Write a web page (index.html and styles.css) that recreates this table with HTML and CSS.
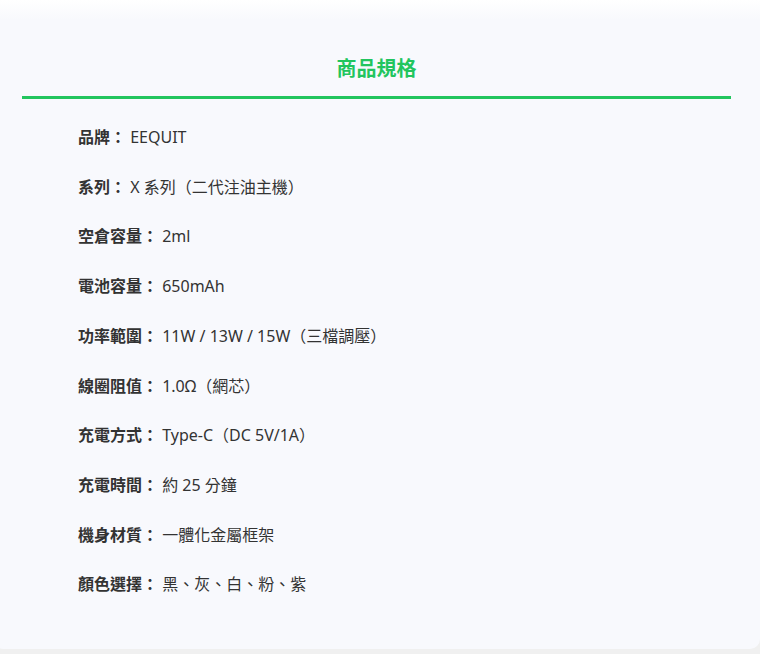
FILE: index.html
```html
<!DOCTYPE html>
<html lang="zh-Hant">
<head>
<meta charset="utf-8">
<title>商品規格</title>
<link rel="stylesheet" href="styles.css">
</head>
<body>
<section class="card">
  <h2 class="title">商品規格</h2>
  <ul class="specs">
    <li><b>品牌：</b> EEQUIT</li>
    <li><b>系列：</b> X 系列（二代注油主機）</li>
    <li><b>空倉容量：</b> 2ml</li>
    <li><b>電池容量：</b> 650mAh</li>
    <li><b>功率範圍：</b> 11W / 13W / 15W（三檔調壓）</li>
    <li><b>線圈阻值：</b> 1.0Ω（網芯）</li>
    <li><b>充電方式：</b> Type-C（DC 5V/1A）</li>
    <li><b>充電時間：</b> 約 25 分鐘</li>
    <li><b>機身材質：</b> 一體化金屬框架</li>
    <li><b>顏色選擇：</b> 黑、灰、白、粉、紫</li>
  </ul>
</section>
</body>
</html>
```

FILE: styles.css
```css
html, body {
  margin: 0;
  padding: 0;
  background: #f0f0f0;
}
body {
  font-family: "Noto Sans", "Noto Sans CJK TC", sans-serif;
  color: #333;
  height: 654px;
  overflow: hidden;
}
.card {
  margin: 0 0 0 -7px;
  width: 767px;
  box-sizing: border-box;
  height: 649px;
  border-radius: 0 0 10px 10px;
  background: linear-gradient(to bottom, #ffffff 0px, #f8f9fd 20px, #f8f9fd 100%);
  padding-top: 55px;
}
.title {
  margin: 0 29px;
  padding-bottom: 13px;
  border-bottom: 3px solid #22c55e;
  text-align: center;
  font-size: 20px;
  line-height: 28px;
  font-weight: 700;
  color: #22c55e;
}
.specs {
  list-style: none;
  margin: 0 29px;
  padding: 14px 0 0 56px;
}
.specs li {
  font-size: 16px;
  line-height: 25.7px;
  padding: 12px 0;
}
.specs b {
  font-weight: 700;
}
```
